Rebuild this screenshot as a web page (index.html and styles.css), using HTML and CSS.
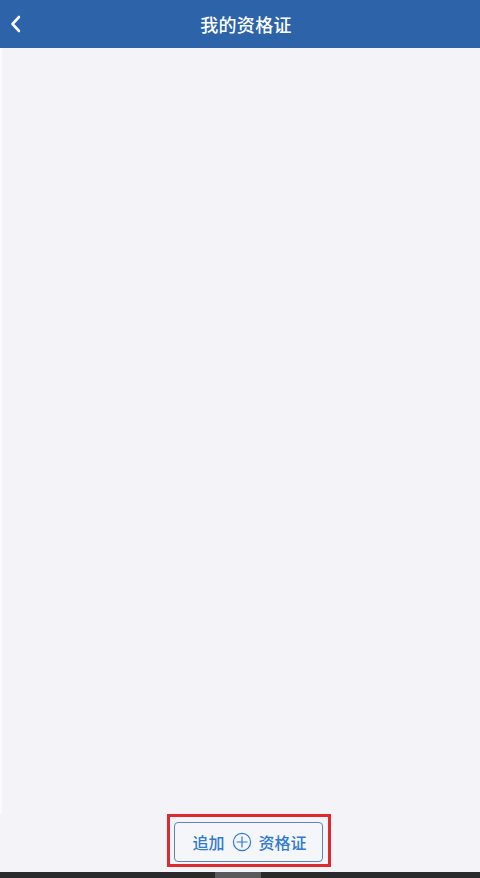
FILE: index.html
```html
<!DOCTYPE html>
<html lang="zh">
<head>
<meta charset="utf-8">
<link rel="stylesheet" href="styles.css">
</head>
<body>
<div class="app">
  <header class="topbar">
    <span class="back">
      <svg width="14" height="18" viewBox="0 0 14 18"><path d="M10 2 L3.5 9 L10 16" fill="none" stroke="#fff" stroke-width="2.6" stroke-linecap="round" stroke-linejoin="round"/></svg>
    </span>
    <h1 class="title">我的资格证</h1>
  </header>
  <main class="content"></main>
  <footer class="footer">
    <div class="highlight">
      <button class="add-btn">
        <span>追加</span>
        <svg class="plus" width="20" height="20" viewBox="0 0 20 20"><circle cx="10" cy="10" r="8.6" fill="none" stroke="#2f7ad0" stroke-width="1.2"/><path d="M10 4.5 V15.5 M4.5 10 H15.5" stroke="#2f7ad0" stroke-width="1.2"/></svg>
        <span>资格证</span>
      </button>
    </div>
  </footer>
  <div class="homebar"><span class="seg"></span></div>
</div>
</body>
</html>
```
FILE: styles.css
```css
* { box-sizing: border-box; }
html, body { margin: 0; padding: 0; }
body {
  width: 480px;
  height: 878px;
  overflow: hidden;
  font-family: "Noto Sans CJK SC", "Noto Sans", sans-serif;
  background: #f3f3f8;
}
.app {
  display: flex;
  flex-direction: column;
  height: 878px;
}
.topbar {
  height: 48px;
  background: #2c63a9;
  display: flex;
  align-items: center;
  justify-content: center;
  position: relative;
}
.back {
  position: absolute;
  left: 9px;
  top: 15px;
  display: flex;
}
.title {
  margin: 0 0 0 12px;
  color: #fff;
  font-size: 18px;
  font-weight: 500;
  letter-spacing: 0.3px;
}
.content {
  flex: 1;
  background: #f3f3f8;
  border-left: 2px solid #fbfbfd;
}
.footer {
  display: flex;
  justify-content: center;
  padding-left: 18px;
  padding-bottom: 5px;
  background: #f3f3f8;
}
.highlight {
  border: 3px solid #dc2a2f;
  padding: 5px 5px 2px 4px;
  display: flex;
}
.add-btn {
  width: 149px;
  height: 40px;
  border: 1px solid #5e84b9;
  border-radius: 4px;
  background: #f5f6fa;
  display: flex;
  align-items: center;
  justify-content: center;
  gap: 5px;
  font-family: "Noto Sans CJK SC", "Noto Sans", sans-serif;
  font-size: 16px;
  font-weight: 500;
  color: #2f7ad0;
  padding: 0 0 0 2px;
}
.plus { margin: 0 2px; }
.homebar {
  height: 6px;
  background: #2a2a2c;
  display: flex;
}
.seg {
  margin-left: 215px;
  width: 46px;
  background: #5a5a5e;
}
```
